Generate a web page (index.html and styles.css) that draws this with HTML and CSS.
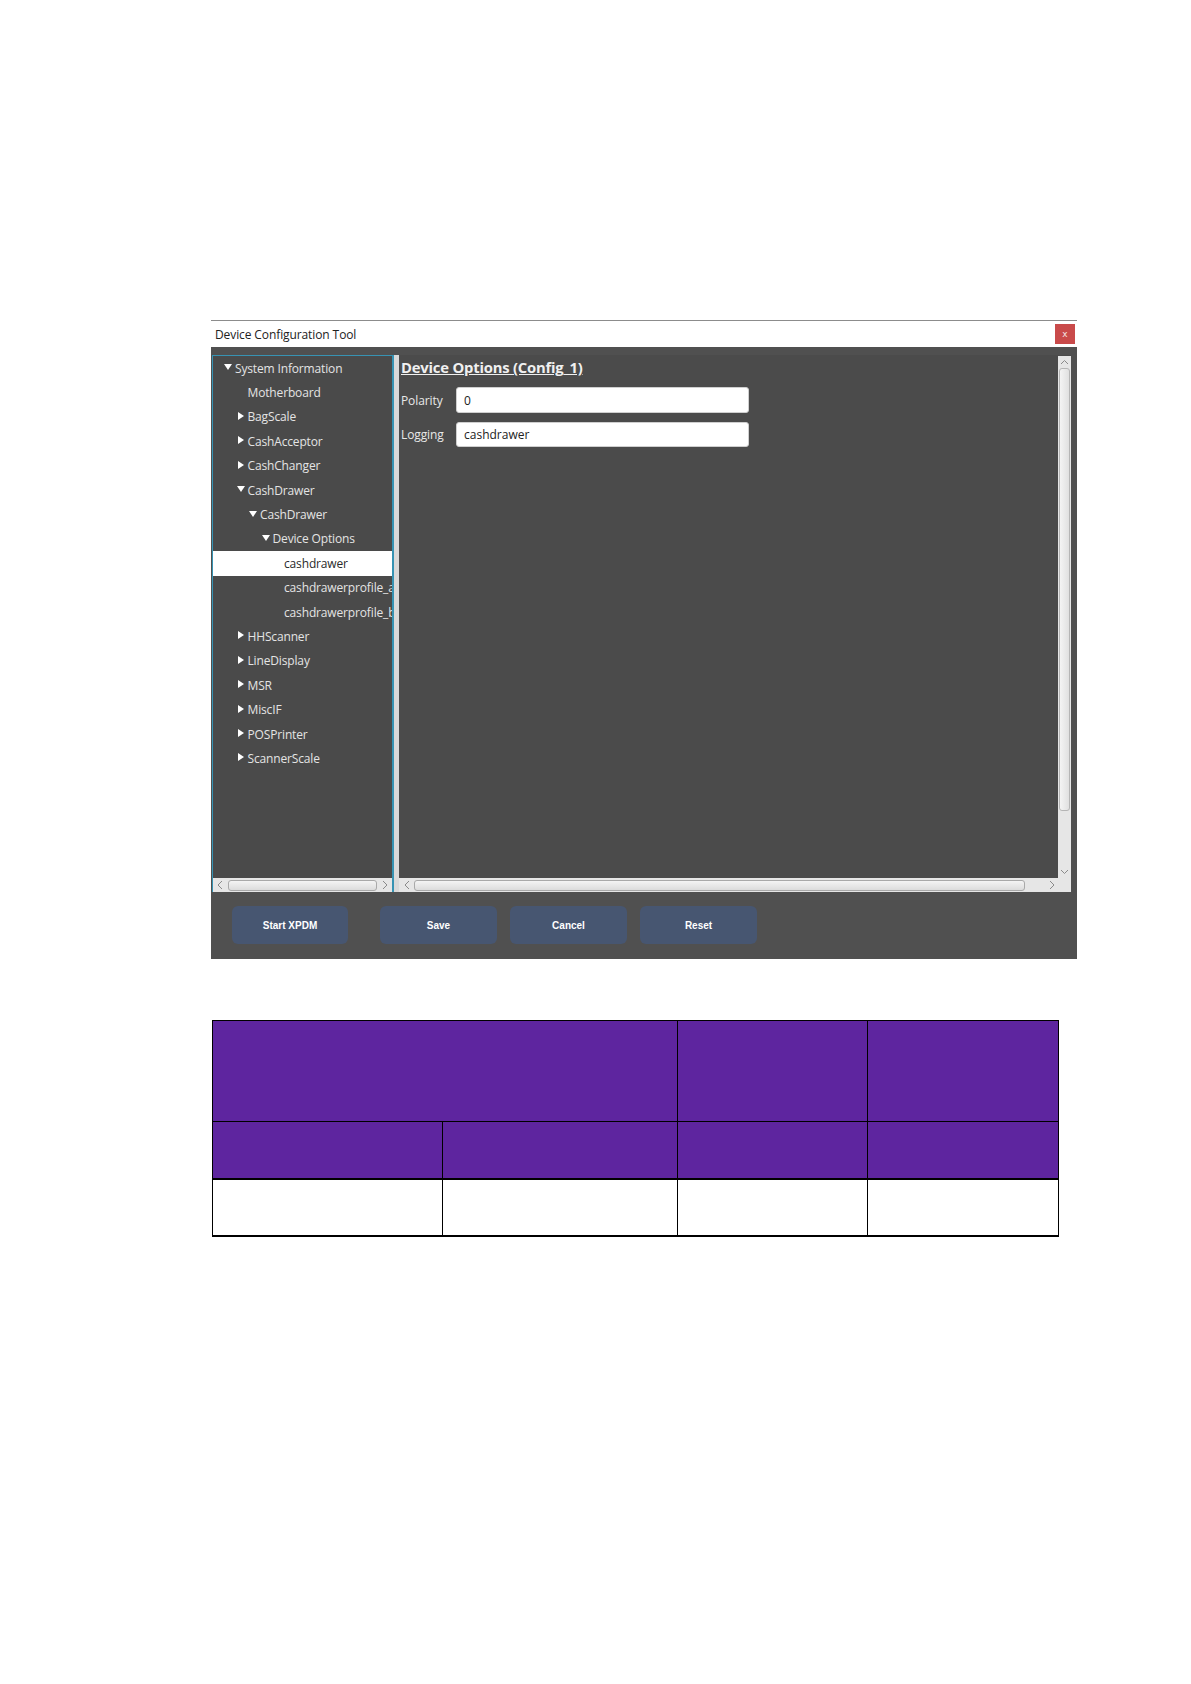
FILE: index.html
```html
<!DOCTYPE html>
<html>
<head>
<meta charset="utf-8">
<title>Device Configuration Tool</title>
<link rel="stylesheet" href="styles.css">
</head>
<body>
<div class="page">
  <div class="window">
    <div class="titlebar">
      <span class="title">Device Configuration Tool</span>
      <span class="close">x</span>
    </div>
    <div class="body">
      <div class="panels">
        <div class="tree">
          <div class="tree-list">
            <div class="row l0"><span class="tri down"></span>System Information</div>
            <div class="row l1"><span class="tri none"></span>Motherboard</div>
            <div class="row l1"><span class="tri right"></span>BagScale</div>
            <div class="row l1"><span class="tri right"></span>CashAcceptor</div>
            <div class="row l1"><span class="tri right"></span>CashChanger</div>
            <div class="row l1"><span class="tri down"></span>CashDrawer</div>
            <div class="row l2"><span class="tri down"></span>CashDrawer</div>
            <div class="row l3"><span class="tri down"></span>Device Options</div>
            <div class="row l4 selected"><span class="tri none"></span>cashdrawer</div>
            <div class="row l4"><span class="tri none"></span>cashdrawerprofile_a</div>
            <div class="row l4"><span class="tri none"></span>cashdrawerprofile_b</div>
            <div class="row l1"><span class="tri right"></span>HHScanner</div>
            <div class="row l1"><span class="tri right"></span>LineDisplay</div>
            <div class="row l1"><span class="tri right"></span>MSR</div>
            <div class="row l1"><span class="tri right"></span>MiscIF</div>
            <div class="row l1"><span class="tri right"></span>POSPrinter</div>
            <div class="row l1"><span class="tri right"></span>ScannerScale</div>
          </div>
          <div class="hscroll tree-hscroll">
            <svg class="arrow" width="8" height="12" viewBox="0 0 8 12"><polyline points="6,2 2,6 6,10" fill="none" stroke="#8a8a8a" stroke-width="1"/></svg>
            <div class="hthumb"></div>
            <svg class="arrow" width="8" height="12" viewBox="0 0 8 12"><polyline points="2,2 6,6 2,10" fill="none" stroke="#8a8a8a" stroke-width="1"/></svg>
          </div>
        </div>
        <div class="splitter"></div>
        <div class="content">
          <div class="content-main">
            <div class="heading">Device Options (Config_1)</div>
            <div class="field first">
              <span class="label">Polarity</span>
              <div class="input">0</div>
            </div>
            <div class="field">
              <span class="label">Logging</span>
              <div class="input">cashdrawer</div>
            </div>
          </div>
          <div class="vscroll">
            <svg class="varrow" width="13" height="10" viewBox="0 0 13 10"><polyline points="3,7 6.5,3.5 10,7" fill="none" stroke="#8a8a8a" stroke-width="1"/></svg>
            <div class="vthumb"></div>
            <svg class="varrow" width="13" height="10" viewBox="0 0 13 10"><polyline points="3,3 6.5,6.5 10,3" fill="none" stroke="#8a8a8a" stroke-width="1"/></svg>
          </div>
          <div class="hscroll content-hscroll">
            <svg class="arrow" width="8" height="12" viewBox="0 0 8 12"><polyline points="6,2 2,6 6,10" fill="none" stroke="#8a8a8a" stroke-width="1"/></svg>
            <div class="hthumb"></div>
            <svg class="arrow right-gap" width="8" height="12" viewBox="0 0 8 12"><polyline points="2,2 6,6 2,10" fill="none" stroke="#8a8a8a" stroke-width="1"/></svg>
          </div>
          <div class="corner"></div>
        </div>
      </div>
      <div class="buttons">
        <div class="btn start">Start XPDM</div>
        <div class="btn">Save</div>
        <div class="btn">Cancel</div>
        <div class="btn">Reset</div>
      </div>
    </div>
  </div>

  <table class="grid">
    <colgroup>
      <col class="c1"><col class="c2"><col class="c3"><col class="c4">
    </colgroup>
    <tr class="r1"><td class="purple" colspan="2"></td><td class="purple"></td><td class="purple"></td></tr>
    <tr class="r2"><td class="purple"></td><td class="purple"></td><td class="purple"></td><td class="purple"></td></tr>
    <tr class="r3"><td></td><td></td><td></td><td></td></tr>
  </table>
</div>
</body>
</html>
```
FILE: styles.css
```css
html, body {
  margin: 0;
  background: #ffffff;
}
body {
  font-family: "Open Sans", "Noto Sans", sans-serif;
}
.page {
  padding: 320px 0 0 211px;
}
.window {
  width: 866px;
}
.titlebar {
  height: 26px;
  border-top: 1px solid #8c8c8c;
  background: #ffffff;
  display: flex;
  align-items: center;
  justify-content: space-between;
  padding-left: 4px;
  padding-right: 2px;
}
.title {
  font-size: 12px;
  color: #222222;
  letter-spacing: -0.1px;
}
.close {
  width: 20px;
  height: 20px;
  background: #c94a4a;
  color: #f4e4e4;
  font-family: "DejaVu Sans", sans-serif;
  font-size: 9px;
  display: flex;
  align-items: center;
  justify-content: center;
}
.body {
  background: #505050;
  height: 604px;
  padding: 8px 6px 0 1px;
}
.panels {
  display: flex;
  height: 537px;
}
.tree {
  width: 179px;
  border-top: 1px solid #3793b3;
  border-left: 1px solid #3793b3;
  border-right: 2px solid #3793b3;
  background: #4a4a4a;
  display: grid;
  grid-template-rows: 1fr 14px;
}
.tree-list {
  overflow: hidden;
}
.row {
  height: 24.4px;
  display: flex;
  align-items: center;
  font-size: 12px;
  color: #e4e4e4;
  white-space: nowrap;
  letter-spacing: -0.15px;
}
.row.selected {
  background: #ffffff;
  color: #2a2a2a;
}
.l0 { padding-left: 11px; }
.l1 { padding-left: 23.5px; }
.l2 { padding-left: 36px; }
.l3 { padding-left: 48.5px; }
.l4 { padding-left: 60px; }
.tri {
  width: 0;
  height: 0;
  flex: none;
}
.tri.down {
  border-left: 4px solid transparent;
  border-right: 4px solid transparent;
  border-top: 6px solid #ffffff;
  margin-right: 3px;
  margin-top: -2px;
}
.tri.right {
  border-top: 4px solid transparent;
  border-bottom: 4px solid transparent;
  border-left: 6px solid #ffffff;
  margin-left: 1px;
  margin-right: 4px;
  margin-top: -2px;
}
.tri.none {
  width: 8px;
  margin-right: 3px;
}
.hscroll {
  background: #e6e6e6;
  display: flex;
  align-items: center;
  padding: 0 3px;
  gap: 3px;
}
.hthumb {
  flex: 1;
  height: 9px;
  border: 1px solid #a9a9a9;
  border-radius: 3px;
  background: linear-gradient(#f4f4f4, #dcdcdc);
}
.arrow {
  flex: none;
}
.tree-hscroll {
  padding: 0 3px 0 3px;
  gap: 4px;
}
.splitter {
  width: 5px;
  background: #d9d9d9;
}
.content {
  flex: 1;
  background: #4b4b4b;
  display: grid;
  grid-template-columns: 1fr 13px;
  grid-template-rows: 1fr 14px;
}
.content-main {
  padding: 2px 0 0 2px;
  color: #f0f0f0;
}
.heading {
  font-size: 14.8px;
  font-weight: bold;
  text-decoration: underline;
  line-height: 20px;
  letter-spacing: -0.2px;
}
.field {
  display: flex;
  align-items: center;
  margin-top: 9px;
  height: 25px;
}
.field.first {
  margin-top: 10px;
  height: 26px;
}
.label {
  width: 55px;
  font-size: 12px;
  color: #e8e8e8;
  letter-spacing: -0.1px;
}
.input {
  width: 293px;
  height: 100%;
  box-sizing: border-box;
  background: #ffffff;
  border: 1px solid #cfcfcf;
  border-radius: 3px;
  padding-left: 7px;
  display: flex;
  align-items: center;
  font-size: 12px;
  color: #222222;
}
.vscroll {
  background: #e6e6e6;
  display: flex;
  flex-direction: column;
  align-items: center;
  margin-top: 1px;
}
.varrow {
  flex: none;
  margin: 1px 0;
}
.vthumb {
  width: 9px;
  height: 441px;
  border: 1px solid #b5b5b5;
  border-radius: 3px;
  background: linear-gradient(90deg, #f4f4f4, #e0e0e0);
  margin-bottom: auto;
}
.content-hscroll {
  padding: 0 0 0 4px;
}
.content-hscroll .hthumb {
  flex: none;
  width: 609px;
}
.content-hscroll .right-gap {
  margin-left: auto;
  margin-right: 2px;
}
.corner {
  background: #e6e6e6;
}
.buttons {
  display: flex;
  padding: 14px 0 0 20px;
  gap: 13px;
}
.btn {
  width: 117px;
  height: 38px;
  border-radius: 6px;
  background: #475671;
  color: #ffffff;
  font-family: "Liberation Sans", Arial, sans-serif;
  font-weight: bold;
  font-size: 10px;
  display: flex;
  align-items: center;
  justify-content: center;
}
.btn.start {
  width: 116px;
  margin-right: 19px;
}
.grid {
  margin: 61px 0 0 1px;
  width: 846px;
  border-collapse: collapse;
  table-layout: fixed;
  border-bottom: 2.5px solid #000000;
}
.c1 { width: 230px; }
.c2 { width: 235px; }
.c3 { width: 190px; }
.c4 { width: 191px; }
.grid td {
  border: 1.5px solid #000000;
  padding: 0;
}
.grid td.purple {
  background: #5e259f;
}
.r1 { height: 101px; }
.r2 { height: 57px; }
.r2 td { border-bottom: 2px solid #000000; }
.r3 { height: 57px; }
```
